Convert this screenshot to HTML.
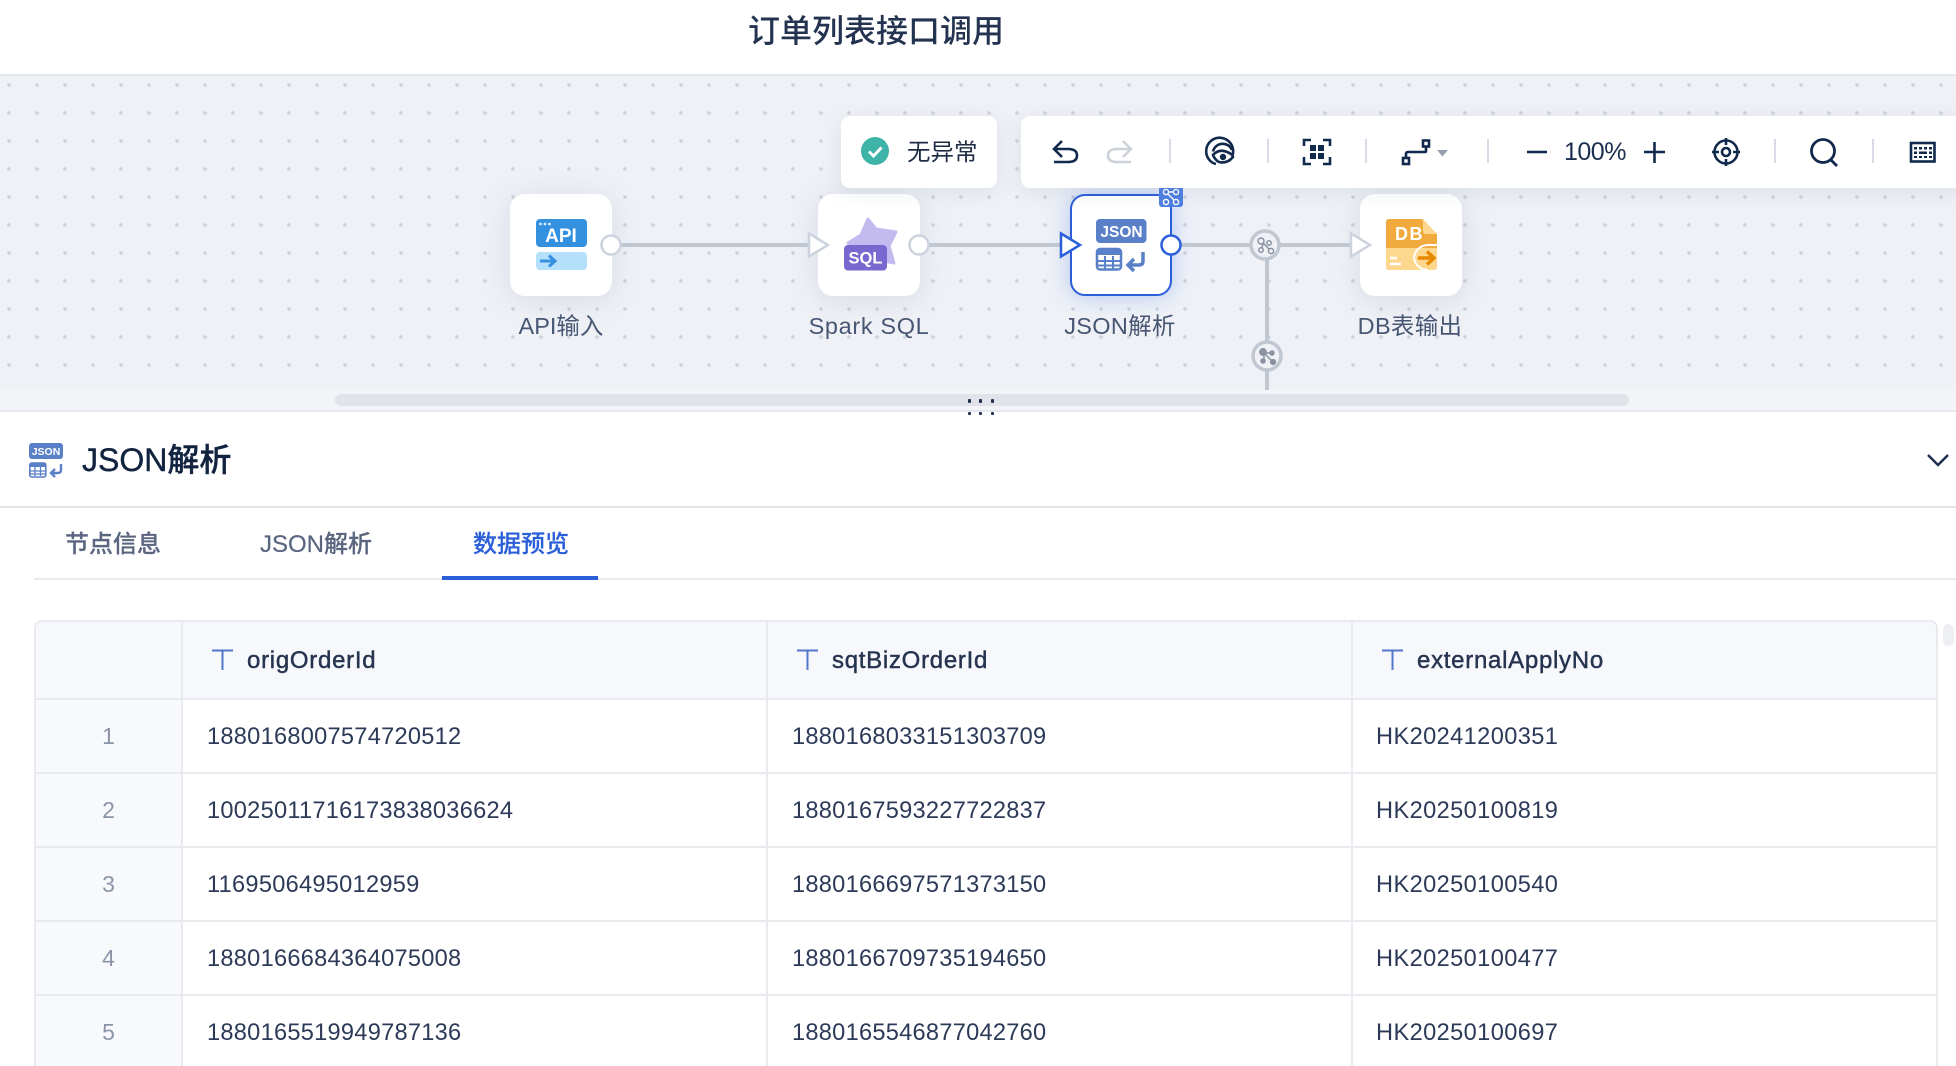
<!DOCTYPE html>
<html lang="zh"><head><meta charset="utf-8"><title>订单列表接口调用</title>
<style>
*{box-sizing:border-box;margin:0;padding:0}
html,body{width:1956px;height:1066px;overflow:hidden;background:#fff;font-family:"Liberation Sans","Noto Sans CJK SC",sans-serif;color:#1f2d4a}
#page{position:relative;width:1956px;height:1066px;overflow:hidden}
.a{position:absolute}
#title{left:748px;top:8px;font-size:32px;line-height:46px;font-weight:500;color:#233350;letter-spacing:0;white-space:nowrap}
#canvas{left:0;top:74px;width:1956px;height:338px;background-color:#eff1f6;border-top:2px solid #e6e8ef;border-bottom:2px solid #e6e8ef;overflow:hidden}
#dots{left:0;top:0;width:1956px;height:314px;background-image:radial-gradient(circle at 9px 9px,#cfd2da 1.6px,transparent 2px);background-size:28px 28px;background-position:0 0}
#track{left:0;top:314px;width:1956px;height:20px;background:#f3f4f8}
#thumb{left:335px;top:318px;width:1294px;height:12px;border-radius:6px;background:#e0e3ea}
.node{position:absolute;top:118px;width:102px;height:102px;background:#fff;border-radius:15px;box-shadow:0 4px 30px rgba(90,110,150,.16)}
.node.sel{border:2.5px solid #2b5fd9;box-shadow:0 0 22px rgba(60,120,240,.35)}
.lab{position:absolute;top:233px;font-size:23.5px;line-height:34px;color:#475672;white-space:nowrap;transform:translateX(-50%)}
.pop{position:absolute;background:#fff;box-shadow:0 4px 20px rgba(90,110,150,.12);border-radius:9px}
#head{left:82px;top:436px;font-size:32px;line-height:48px;font-weight:500;color:#11233f;white-space:nowrap;-webkit-text-stroke:.4px #11233f}
#hline{left:0;top:506px;width:1956px;height:2px;background:#e3e4e9}
.tab{position:absolute;top:527px;font-size:24px;line-height:36px;color:#5a6580;white-space:nowrap;font-weight:500;-webkit-text-stroke:.2px currentColor}
#tline{left:34px;top:578px;width:1922px;height:2px;background:#e8eaf0}
#tact{left:442px;top:576px;width:156px;height:4px;background:#2b5fd9}
#tbl{left:34px;top:620px;width:1904px;height:446px;border:2px solid #e8eaf0;border-bottom:0;border-radius:8px 8px 0 0;overflow:hidden}
.th{position:absolute;top:0;height:78px;background:#f7f8fc;border-bottom:2px solid #e8eaf0;border-right:2px solid #e8eaf0}
.idx{position:absolute;left:0;width:147px;height:74px;background:#f8f9fc;border-right:2px solid #e8eaf0;border-bottom:2px solid #e8eaf0;text-align:center;font-size:23px;line-height:72px;color:#8b94a7}
.c{position:absolute;height:74px;border-right:2px solid #e8eaf0;border-bottom:2px solid #e8eaf0;font-size:23.6px;line-height:74px;padding-left:24px;color:#2c3a58;white-space:nowrap;letter-spacing:.27px}
.tt{position:absolute;top:0;font-size:24px;line-height:78px;color:#26344f;-webkit-text-stroke:.45px #26344f;white-space:nowrap;letter-spacing:.72px}
#sb{left:1943px;top:624px;width:11px;height:22px;background:#eeeff2;border-radius:5px}
</style></head><body><div id="page">
<div id="title" class="a">订单列表接口调用</div>

<div id="canvas" class="a">
 <div id="dots" class="a"></div>
 <div id="track" class="a"></div>
 <div id="thumb" class="a"></div>
 <div class="node" style="left:510px"></div>
 <div class="node" style="left:818px"></div>
 <div class="node sel" style="left:1070px"></div>
 <div class="node" style="left:1360px"></div>
 <div class="lab" style="left:561px">API输入</div>
 <div class="lab" style="left:869px;letter-spacing:.65px">Spark SQL</div>
 <div class="lab" style="left:1120px;letter-spacing:.3px">JSON解析</div>
 <div class="lab" style="left:1410px;letter-spacing:.3px">DB表输出</div>
</div>

<svg class="a" style="left:0;top:0" width="1956" height="416" viewBox="0 0 1956 416" fill="none" font-family="'Liberation Sans',sans-serif">
 <!-- links -->
 <g stroke="#c0c7d1" stroke-width="4">
  <path d="M620 245H810M926 245H1062M1180 245H1350M1267 245V390"/>
 </g>
 <!-- ports -->
 <circle cx="611" cy="245" r="9.5" fill="#fff" stroke="#cdd3de" stroke-width="2.5"/>
 <circle cx="919" cy="245" r="9.5" fill="#fff" stroke="#cdd3de" stroke-width="2.5"/>
 <path d="M809 233.500L828 245 809 256.500Z" fill="#fff" stroke="#cdd3de" stroke-width="2.500"/>
 <path d="M1351 233.500L1370 245 1351 256.500Z" fill="#fff" stroke="#cdd3de" stroke-width="2.500"/>
 <path d="M1061 233.500L1080 245 1061 256.500Z" fill="#fff" stroke="#2b5fd9" stroke-width="2.500"/>
 <circle cx="1171" cy="245" r="9.500" fill="#fff" stroke="#2b5fd9" stroke-width="2.500"/>
 <!-- badge -->
 <rect x="1159" y="180" width="24" height="27" rx="3" fill="#4f80e3"/>
 <g stroke="#fff" stroke-width="1.400" fill="none"><circle cx="1166" cy="192" r="2.600"/><circle cx="1176" cy="192" r="2.600"/><circle cx="1166" cy="202" r="2.600"/><circle cx="1176" cy="202" r="2.600"/><path d="M1168 194l6 6M1168 192h6"/></g>
 <!-- branch circles -->
 <circle cx="1265" cy="245" r="14" fill="#eff1f6" stroke="#c0c7d1" stroke-width="3.500"/>
 <circle cx="1267" cy="356" r="14" fill="#eff1f6" stroke="#c0c7d1" stroke-width="3.500"/>
 <g stroke="#8a92a2" stroke-width="1.500" fill="none"><circle cx="1261" cy="241" r="3"/><circle cx="1269" cy="243" r="2.200"/><circle cx="1261" cy="250" r="2.200"/><circle cx="1271" cy="251" r="2.600"/><path d="M1263 243l6 6M1263 243l-1 5"/></g>
 <g fill="#8a92a2" stroke="#8a92a2" stroke-width="1.500"><circle cx="1263" cy="352" r="3.200"/><circle cx="1272" cy="353" r="2"/><circle cx="1263" cy="361" r="2"/><circle cx="1273" cy="362" r="2.400"/><path d="M1265 354l7 7M1264 354v6M1265 353h6"/></g>

 <!-- API icon -->
 <rect x="536" y="219" width="51" height="28" rx="4" fill="#3491e0"/>
 <circle cx="540.500" cy="224" r="1.400" fill="#d8ecfb"/><circle cx="545" cy="224" r="1.400" fill="#d8ecfb"/><circle cx="549.500" cy="224" r="1.400" fill="#d8ecfb"/>
 <text x="561" y="242" font-size="19" font-weight="700" fill="#fff" text-anchor="middle">API</text>
 <rect x="536" y="252" width="51" height="18" rx="4" fill="#b5e0fb"/>
 <path d="M540 261h14M549 255.500l6 5.500-6 5.500" stroke="#3491e0" stroke-width="3"/>

 <!-- SQL icon -->
 <path d="M868 219l8 10 20 3-7 14 5 17-20-4-26-16 13-8z" fill="#c3baef" stroke="#c3baef" stroke-width="3" stroke-linejoin="round"/>
 <rect x="844" y="245" width="43" height="25.500" rx="4" fill="#7868cf"/>
 <text x="865.500" y="263.500" font-size="16.500" font-weight="700" fill="#fff" text-anchor="middle">SQL</text>

 <!-- JSON icon -->
 <rect x="1096" y="219" width="50.500" height="24" rx="4" fill="#5a80c8"/>
 <text x="1121.500" y="237" font-size="15.500" font-weight="700" fill="#fff" text-anchor="middle">JSON</text>
 <rect x="1097" y="249" width="24" height="20.500" rx="3" fill="#fff" stroke="#5a80c8" stroke-width="2.500"/>
 <rect x="1097" y="249" width="24" height="6" rx="2" fill="#5a80c8"/>
 <path d="M1098 261h22M1098 265.500h22M1105 256v13M1113 256v13" stroke="#5a80c8" stroke-width="2"/>
 <path d="M1143 252v9q0 4-4 4h-9M1134 259l-6 6 6 6" stroke="#5a80c8" stroke-width="3.500"/>

 <!-- DB icon -->
 <path d="M1386 248v-26q0-3 3-3h33l15 15v14z" fill="#f0aa3e"/>
 <path d="M1423 219l14 15h-11q-3 0-3-3z" fill="#fdd78e"/>
 <path d="M1386 248h51v19q0 3-3 3h-45q-3 0-3-3z" fill="#fdd78e"/>
 <text x="1395" y="240" font-size="18" font-weight="700" fill="#fff" letter-spacing="1.500">DB</text>
 <path d="M1437 245h-9a14 14 0 0 0-14 13 14 14 0 0 0 14 12" stroke="#fff" stroke-width="2"/>
 <path d="M1418 258h14M1427 251.500l7 6.500-7 6.500" stroke="#e58a00" stroke-width="3.500"/>
 <path d="M1390 258h7M1390 264h11" stroke="#fff" stroke-width="2.500"/>

 <!-- drag handle -->
 <g fill="#22304d"><rect x="968" y="399" width="3" height="4" rx="1"/><rect x="979" y="399" width="3" height="4" rx="1"/><rect x="991" y="399" width="3" height="4" rx="1"/><rect x="968" y="412" width="3" height="3" rx="1"/><rect x="979" y="412" width="3" height="3" rx="1"/><rect x="991" y="412" width="3" height="3" rx="1"/></g>
</svg>

<!-- status -->
<div class="pop" style="left:841px;top:116px;width:156px;height:72px"></div>
<svg class="a" style="left:861px;top:137px" width="28" height="28" viewBox="0 0 28 28"><circle cx="14" cy="14" r="14" fill="#3eb4a8"/><path d="M8 14.500l4.500 4.500 8-8.500" stroke="#fff" stroke-width="3" fill="none"/></svg>
<div class="a" style="left:907px;top:135px;font-size:23.500px;line-height:34px;color:#1d2b45;white-space:nowrap">无异常</div>

<!-- toolbar -->
<div class="pop" style="left:1021px;top:116px;width:950px;height:72px"></div>
<svg class="a" style="left:0;top:0" width="1956" height="200" viewBox="0 0 1956 200" fill="none">
 <g fill="#d8dbe5"><rect x="1169" y="139" width="2" height="24"/><rect x="1267" y="139" width="2" height="24"/><rect x="1365" y="139" width="2" height="24"/><rect x="1487" y="139" width="2" height="24"/><rect x="1774" y="139" width="2" height="24"/><rect x="1872" y="139" width="2" height="24"/></g>
 <g stroke="#11294d" stroke-width="2.600">
  <!-- undo -->
  <path d="M1062 141l-8 8 8 8M1055 149h13q9 0 9 6.500t-9 6.500h-14"/>
  <!-- eye -->
  <path d="M1229 161a13.500 13.500 0 1 0-20 -1.500 12 12 0 0 0 7 4.500" />
  <path d="M1232 150a10 10 0 0 0-19 1.500"/>
  <path d="M1213 155q7-8 18-1 2 2 2 3-6 7-14 5-4-2-6-7z" fill="#fff"/>
  <circle cx="1223" cy="157" r="3.200" fill="#11294d" stroke="none"/>
  <!-- focus -->
  <path d="M1304 146v-6h7M1323 140h7v6M1304 157v7h7M1323 164h7v-7"/>
  <!-- path -->
  <rect x="1423" y="140.500" width="6" height="6"/><rect x="1403" y="158" width="6" height="6"/>
  <path d="M1426 147v4q0 1-1 1h-17q-2 0-2 2v4"/>
  <!-- minus plus -->
  <path d="M1527 152h20M1644 152h21M1654.500 142v21"/>
  <!-- locate -->
  <circle cx="1726" cy="152" r="11.500"/><circle cx="1726" cy="152" r="4"/>
  <path d="M1726 138v7M1726 159v7M1712 152h7M1733 152h7"/>
  <!-- search -->
  <circle cx="1823" cy="151" r="11.500" stroke-width="2.800"/><path d="M1831 160l6 6" stroke-width="2.800"/>
  <!-- keyboard -->
  <rect x="1911" y="143" width="23.500" height="18.500"/>
 </g>
 <path d="M1123 141l8 8-8 8M1130 149h-13q-9 0-9 6.500t9 6.500h14" stroke="#cdd1d9" stroke-width="2.600"/>
 <g fill="#11294d"><rect x="1310" y="145" width="6" height="6"/><rect x="1318" y="145" width="6" height="6"/><rect x="1310" y="153" width="6" height="6"/><rect x="1318" y="153" width="6" height="6"/></g>
 <path d="M1437 150h11l-5.500 6.500z" fill="#969db0"/>
 <g fill="#11294d"><rect x="1914" y="147" width="3" height="2.500"/><rect x="1919" y="147" width="3" height="2.500"/><rect x="1924" y="147" width="3" height="2.500"/><rect x="1929" y="147" width="3" height="2.500"/><rect x="1914" y="151.500" width="3" height="2.500"/><rect x="1929" y="151.500" width="3" height="2.500"/><rect x="1919" y="151.500" width="8" height="2.500"/><rect x="1914" y="156" width="3" height="2"/><rect x="1919" y="156" width="3" height="2"/><rect x="1924" y="156" width="3" height="2"/><rect x="1929" y="156" width="3" height="2"/></g>
</svg>
<div class="a" style="left:1564px;top:134px;font-size:25px;line-height:36px;color:#1b3050;white-space:nowrap;letter-spacing:-.5px">100%</div>

<!-- section header -->
<svg class="a" style="left:29px;top:443px" width="34" height="35" viewBox="0 0 34 35" fill="none" font-family="'Liberation Sans',sans-serif">
 <rect x="0" y="0" width="34" height="16" rx="3" fill="#5a80c8"/>
 <text x="17" y="12" font-size="10.500" font-weight="700" fill="#fff" text-anchor="middle">JSON</text>
 <rect x=".800" y="20" width="16" height="14" rx="2" fill="#fff" stroke="#5a80c8" stroke-width="1.600"/>
 <rect x="1" y="20" width="16" height="4" fill="#5a80c8"/>
 <path d="M1 28h16M1 31h16M6 24v9M11.500 24v9" stroke="#5a80c8" stroke-width="1.300"/>
 <path d="M32 21v6q0 3-3 3h-6M26 26l-4 4 4 4" stroke="#5a80c8" stroke-width="2.400"/>
</svg>
<div id="head" class="a">JSON解析</div>
<svg class="a" style="left:1925px;top:452px" width="26" height="16" viewBox="0 0 26 16" fill="none"><path d="M3 3l10 10L23 3" stroke="#1d2f4f" stroke-width="2.500"/></svg>
<div id="hline" class="a"></div>

<!-- tabs -->
<div class="tab" style="left:65px">节点信息</div>
<div class="tab" style="left:260px">JSON解析</div>
<div class="tab" style="left:473px;color:#2b5fd9">数据预览</div>
<div id="tline" class="a"></div><div id="tact" class="a"></div>

<!-- table -->
<div id="tbl" class="a">
 <div class="th" style="left:0;width:147px"></div>
 <div class="th" style="left:147px;width:585px"></div>
 <div class="th" style="left:732px;width:585px"></div>
 <div class="th" style="left:1317px;width:590px;border-right:0"></div>
 <svg class="a" style="left:175px;top:27px" width="24" height="22" viewBox="0 0 24 22" fill="none"><path d="M1 1.500h21M11.500 1.500V21" stroke="#4f78c8" stroke-width="2"/></svg>
 <svg class="a" style="left:760px;top:27px" width="24" height="22" viewBox="0 0 24 22" fill="none"><path d="M1 1.500h21M11.500 1.500V21" stroke="#4f78c8" stroke-width="2"/></svg>
 <svg class="a" style="left:1345px;top:27px" width="24" height="22" viewBox="0 0 24 22" fill="none"><path d="M1 1.500h21M11.500 1.500V21" stroke="#4f78c8" stroke-width="2"/></svg>
 <div class="tt" style="left:211px">origOrderId</div>
 <div class="tt" style="left:796px">sqtBizOrderId</div>
 <div class="tt" style="left:1381px">externalApplyNo</div>

 <div class="idx" style="top:78px">1</div>
 <div class="c" style="top:78px;left:147px;width:585px">1880168007574720512</div>
 <div class="c" style="top:78px;left:732px;width:585px">1880168033151303709</div>
 <div class="c" style="top:78px;left:1317px;width:590px;border-right:0;letter-spacing:.4px;padding-left:23px">HK20241200351</div>

 <div class="idx" style="top:152px">2</div>
 <div class="c" style="top:152px;left:147px;width:585px">10025011716173838036624</div>
 <div class="c" style="top:152px;left:732px;width:585px">1880167593227722837</div>
 <div class="c" style="top:152px;left:1317px;width:590px;border-right:0;letter-spacing:.4px;padding-left:23px">HK20250100819</div>

 <div class="idx" style="top:226px">3</div>
 <div class="c" style="top:226px;left:147px;width:585px">1169506495012959</div>
 <div class="c" style="top:226px;left:732px;width:585px">1880166697571373150</div>
 <div class="c" style="top:226px;left:1317px;width:590px;border-right:0;letter-spacing:.4px;padding-left:23px">HK20250100540</div>

 <div class="idx" style="top:300px">4</div>
 <div class="c" style="top:300px;left:147px;width:585px">1880166684364075008</div>
 <div class="c" style="top:300px;left:732px;width:585px">1880166709735194650</div>
 <div class="c" style="top:300px;left:1317px;width:590px;border-right:0;letter-spacing:.4px;padding-left:23px">HK20250100477</div>

 <div class="idx" style="top:374px">5</div>
 <div class="c" style="top:374px;left:147px;width:585px">1880165519949787136</div>
 <div class="c" style="top:374px;left:732px;width:585px">1880165546877042760</div>
 <div class="c" style="top:374px;left:1317px;width:590px;border-right:0;letter-spacing:.4px;padding-left:23px">HK20250100697</div>
</div>
<div id="sb" class="a"></div>
</div></body></html>
